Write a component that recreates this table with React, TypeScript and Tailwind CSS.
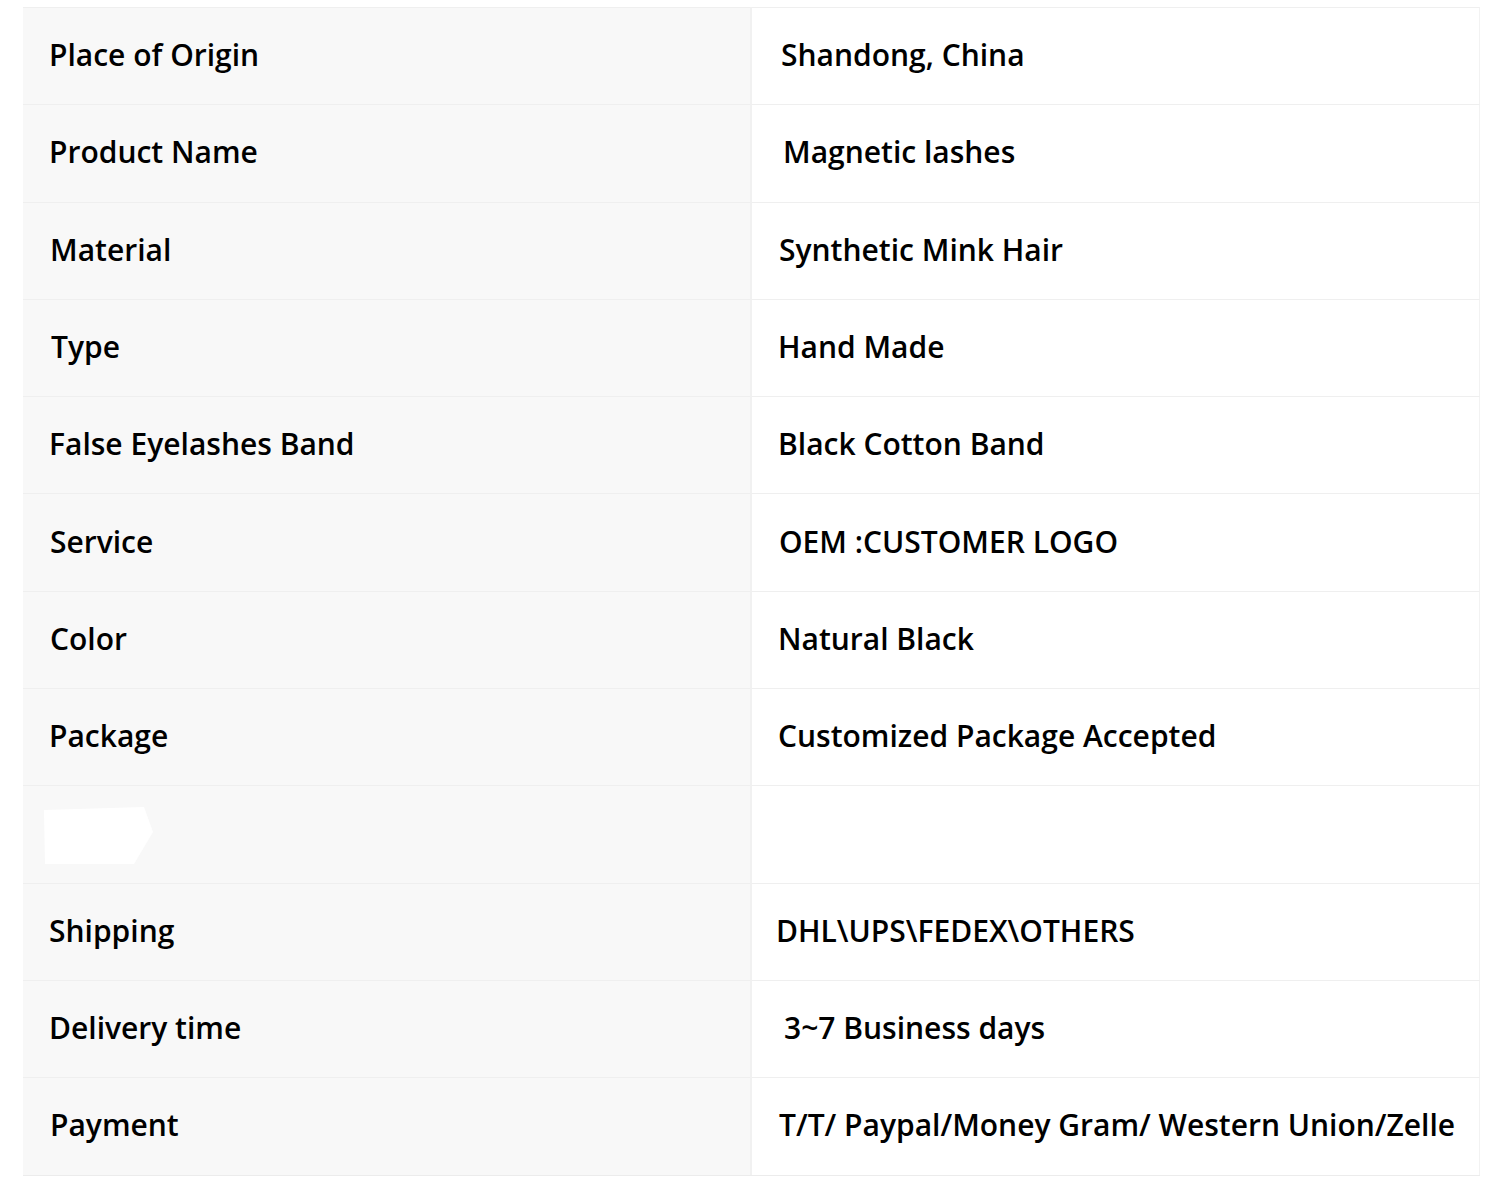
const rows: { label: string; value: string; lp: string; rp: string }[] = [
  { label: 'Place of Origin', value: 'Shandong, China', lp: 'pl-[26px]', rp: 'pl-[29px]' },
  { label: 'Product Name', value: 'Magnetic lashes', lp: 'pl-[26px]', rp: 'pl-[31px]' },
  { label: 'Material', value: 'Synthetic Mink Hair', lp: 'pl-[27px]', rp: 'pl-[27px]' },
  { label: 'Type', value: 'Hand Made', lp: 'pl-[28px]', rp: 'pl-[26px]' },
  { label: 'False Eyelashes Band', value: 'Black Cotton Band', lp: 'pl-[26px]', rp: 'pl-[26px]' },
  { label: 'Service', value: 'OEM :CUSTOMER LOGO', lp: 'pl-[27px]', rp: 'pl-[27px]' },
  { label: 'Color', value: 'Natural Black', lp: 'pl-[27px]', rp: 'pl-[26px]' },
  { label: 'Package', value: 'Customized Package Accepted', lp: 'pl-[26px]', rp: 'pl-[26px]' },
  { label: '', value: '', lp: 'pl-[19px]', rp: 'pl-[26px]' },
  { label: 'Shipping', value: 'DHL\\UPS\\FEDEX\\OTHERS', lp: 'pl-[26px]', rp: 'pl-[24px]' },
  { label: 'Delivery time', value: '3~7 Business days', lp: 'pl-[26px]', rp: 'pl-[32px]' },
  { label: 'Payment', value: 'T/T/ Paypal/Money Gram/ Western Union/Zelle', lp: 'pl-[27px]', rp: 'pl-[27px]' },
];

export default function App() {
  return (
    <div className="w-[1500px] h-[1183px] bg-white pt-[7px] pl-[23px] font-['Open_Sans','Noto_Sans',sans-serif] text-black">
      <div className="w-[1457px] grid grid-cols-[729px_728px] border-b border-[#ececec]">
        {rows.map((r, i) => (
          <div key={i} className="contents">
            <div className={`h-[97.3px] flex items-center pb-[2px] bg-[#f8f8f8] border-t border-[#efefef] border-r-2 border-r-[#f1f1f1] ${r.lp}`}>
              {r.label ? (
                <span className="text-[30px] font-semibold leading-none">{r.label}</span>
              ) : (
                <svg width="112" height="58" viewBox="0 0 112 58" className="mt-[4px]">
                  <polygon points="2,3 102,0 111,25 92,57 3,57" fill="#ffffff" />
                </svg>
              )}
            </div>
            <div className={`h-[97.3px] flex items-center pb-[2px] bg-white border-t border-[#efefef] border-r border-r-[#f2f2f2] ${r.rp}`}>
              <span className="text-[30px] font-semibold leading-none whitespace-nowrap">{r.value}</span>
            </div>
          </div>
        ))}
      </div>
    </div>
  );
}
